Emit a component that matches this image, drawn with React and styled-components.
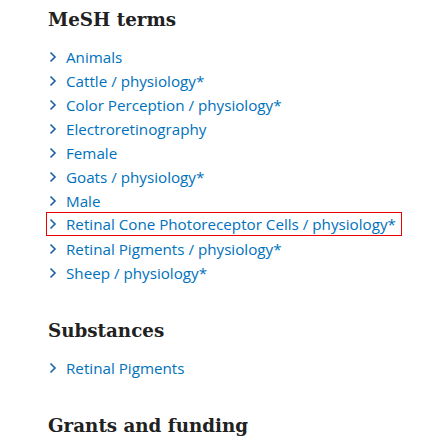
import React from "react";
import styled, { createGlobalStyle } from "styled-components";

const Global = createGlobalStyle`
  html, body { margin: 0; padding: 0; background: #fff; }
  body { font-family: "Open Sans", "Noto Sans", sans-serif; }
`;

const Page = styled.div`
  padding: 4px 0 0 48px;
  width: 400px;
`;

const Section = styled.section`
  margin-bottom: 30px;
  &:last-child { margin-bottom: 0; }
`;

const Heading = styled.h2`
  font-family: "DejaVu Serif", serif;
  font-weight: 700;
  font-size: 18.3px;
  line-height: 32px;
  color: #212121;
  margin: 0 0 9px 0;
`;

const List = styled.ul`
  list-style: none;
  margin: 0;
  padding: 0;
`;

const Item = styled.li`
  display: flex;
  align-items: center;
  gap: 8px;
  height: 24px;
  font-size: 15.2px;
  color: #0071bc;
  margin-left: ${(p) => (p.$hl ? "-2px" : "0")};
  width: ${(p) => (p.$hl ? "356px" : "auto")};
  box-sizing: border-box;
  border: ${(p) => (p.$hl ? "1px solid #e00" : "none")};
  padding-left: ${(p) => (p.$hl ? "1px" : "0")};
  position: relative;
  top: ${(p) => (p.$hl ? "-1px" : "0")};
`;

const Chevron = () => (
  <svg width="10" height="12" viewBox="0 0 10 12" aria-hidden="true">
    <path d="M2.5 1.5 L7 6 L2.5 10.5" fill="none" stroke="#1a5fa8" strokeWidth="1.6" />
  </svg>
);

const mesh = [
  "Animals",
  "Cattle / physiology*",
  "Color Perception / physiology*",
  "Electroretinography",
  "Female",
  "Goats / physiology*",
  "Male",
  "Retinal Cone Photoreceptor Cells / physiology*",
  "Retinal Pigments / physiology*",
  "Sheep / physiology*",
];

export default function App() {
  return (
    <>
      <Global />
      <Page>
        <Section>
          <Heading>MeSH terms</Heading>
          <List>
            {mesh.map((m, i) => (
              <Item key={m} $hl={i === 7}>
                <Chevron />
                {m}
              </Item>
            ))}
          </List>
        </Section>
        <Section>
          <Heading>Substances</Heading>
          <List>
            <Item>
              <Chevron />
              Retinal Pigments
            </Item>
          </List>
        </Section>
        <Section>
          <Heading>Grants and funding</Heading>
        </Section>
      </Page>
    </>
  );
}
